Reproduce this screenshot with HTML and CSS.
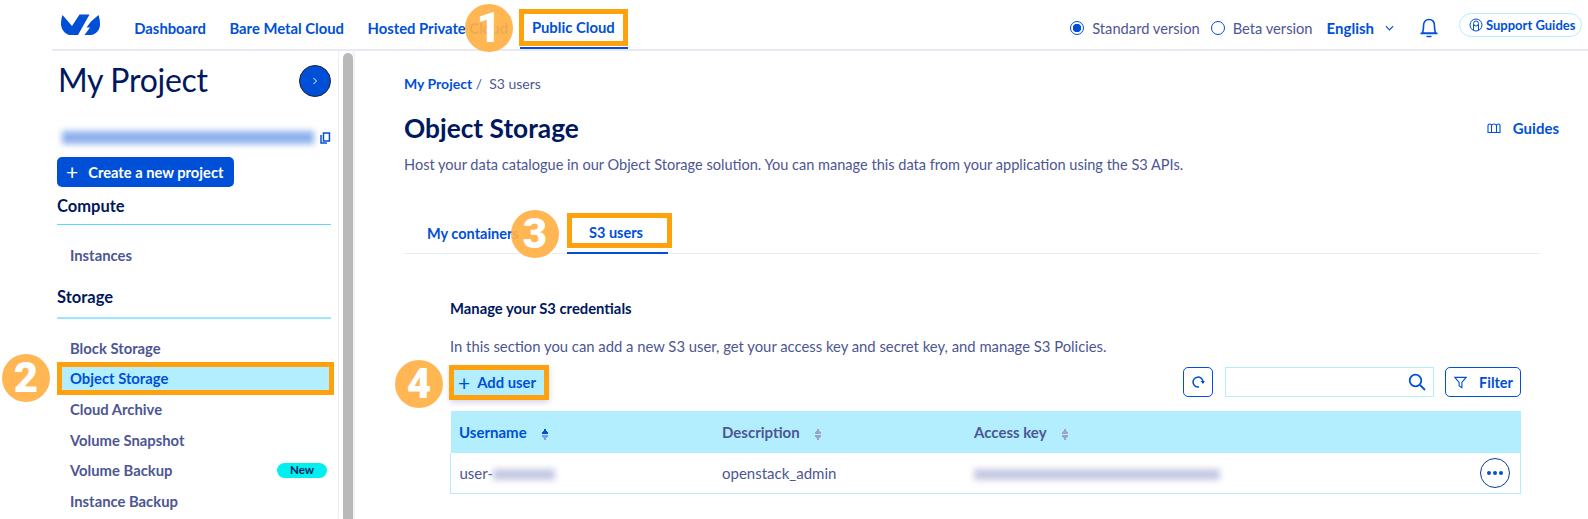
FILE: index.html
```html
<!DOCTYPE html>
<html lang="en">
<head>
<meta charset="utf-8">
<title>Object Storage</title>
<link rel="stylesheet" href="styles.css">
</head>
<body>
<header class="topbar">
  <svg class="logo" viewBox="0 0 39 22"><path d="M1.500 1 L11 12 L18.500 0.500 H28.500 L17 21 H8 C3.500 19.500 0 15 0 10 C0 6.500 0.500 3.500 1.500 1Z"/><path d="M37.500 1 C38.500 4 39 7 39 10.500 C39 16 35 20 30.500 21 H23.500 L29 13.500 H25.500 L30 7.500 Z"/></svg>
  <nav class="mainnav">
    <a class="navitem">Dashboard</a>
    <a class="navitem">Bare Metal Cloud</a>
    <a class="navitem">Hosted Private Cloud</a>
    <a class="navitem navitem-on">Public Cloud</a>
  </nav>
  <div class="topright">
    <span class="radio radio-on"></span><span class="radiolabel">Standard version</span>
    <span class="radio"></span><span class="radiolabel">Beta version</span>
    <span class="lang">English</span>
    <svg class="chev" viewBox="0 0 10 6"><path d="M1 1 L5 5 L9 1"/></svg>
    <svg class="bell" viewBox="0 0 18 20"><path d="M2 15 C3.500 13.500 3.500 11 3.500 8 C3.500 4 5.500 1.500 9 1.500 C12.500 1.500 14.500 4 14.500 8 C14.500 11 14.500 13.500 16 15 Z M0.500 15.500 H17.500 M6.500 18.500 H11.500"/></svg>
    <a class="support">
      <svg class="supporticon" viewBox="0 0 14 14"><circle cx="7" cy="7" r="6"/><circle cx="7" cy="5.500" r="2.500"/><path d="M4.500 6 V12 M9.500 6 V12"/></svg>
      Support Guides
    </a>
  </div>
</header>

<div class="layout">
  <aside class="sidebar">
    <div class="projectrow">
      <h1 class="projecttitle">My Project</h1>
      <span class="roundbtn"><svg viewBox="0 0 6 10"><path d="M1.500 2 L4.500 5 L1.500 8"/></svg></span>
    </div>
    <div class="idrow">
      <span class="idblur"></span>
      <svg class="copy" viewBox="0 0 11 12"><path d="M3.500 1 H9.500 V9 H3.500 Z M1 3 V11 H7"/></svg>
    </div>
    <a class="createbtn"><span class="plus">+</span>Create a new project</a>
    <h2 class="group group-first">Compute</h2>
    <a class="sideitem">Instances</a>
    <h2 class="group">Storage</h2>
    <ul class="sidelist">
      <li class="sideitem">Block Storage</li>
      <li class="sideitem sideitem-on">Object Storage</li>
      <li class="sideitem">Cloud Archive</li>
      <li class="sideitem">Volume Snapshot</li>
      <li class="sideitem">Volume Backup<span class="newpill">New</span></li>
      <li class="sideitem">Instance Backup</li>
    </ul>
  </aside>
  <div class="scrolltrack"><div class="scrollthumb"></div></div>

  <main class="content">
    <div class="crumbs"><a class="crumblink">My Project</a> / &nbsp;S3 users</div>
    <div class="titlerow">
      <h1 class="pagetitle">Object Storage</h1>
      <a class="guides">
        <svg class="guidesicon" viewBox="0 0 14 12"><path d="M1 3.500 C1 1.500 4 1.500 4.500 3.500 C5 1.500 9 1.500 9.500 3.500 C10 1.500 13 1.500 13 3.500 V10.500 H1 Z M4.500 3.500 V10.500 M9.500 3.500 V10.500"/></svg>
        Guides
      </a>
    </div>
    <p class="lead">Host your data catalogue in our Object Storage solution. You can manage this data from your application using the S3 APIs.</p>
    <div class="tabs">
      <a class="tab tab-first">My containers</a>
      <a class="tab tab-on">S3 users</a>
    </div>
    <section class="panel">
      <h3 class="paneltitle">Manage your S3 credentials</h3>
      <p class="paneltext">In this section you can add a new S3 user, get your access key and secret key, and manage S3 Policies.</p>
      <div class="toolbar">
        <a class="adduser"><span class="plus">+</span>Add user</a>
        <div class="tools">
          <span class="iconbtn"><svg viewBox="0 0 14 14"><path d="M8 12 A5 5 0 1 1 12 6.500"/><path class="solid" d="M9.500 6 H14 L12 9 Z"/></svg></span>
          <span class="searchbox"><svg viewBox="0 0 18 18"><circle cx="7.500" cy="7.500" r="5.800"/><path d="M12 12 L17 17"/></svg></span>
          <a class="filterbtn"><svg viewBox="0 0 14 14"><path d="M1 1.500 H13 L8.500 7 V12.500 L5.500 10.500 V7 Z"/></svg>Filter</a>
        </div>
      </div>
      <table class="grid">
        <thead>
          <tr>
            <th class="col-user col-sorted">Username<span class="sort"></span></th>
            <th class="col-desc">Description<span class="sort"></span></th>
            <th class="col-key">Access key<span class="sort"></span></th>
            <th></th>
          </tr>
        </thead>
        <tbody>
          <tr>
            <td>user-<span class="blur blur-user"></span></td>
            <td>openstack_admin</td>
            <td><span class="blur blur-key"></span></td>
            <td class="cell-actions"><span class="morebtn"><i></i><i></i><i></i></span></td>
          </tr>
        </tbody>
      </table>
    </section>
  </main>
</div>

<div class="hl hl-1"></div>
<div class="hl hl-2"></div>
<div class="hl hl-3"></div>
<div class="hl hl-4"></div>
<div class="num num-1">1</div>
<div class="num num-2">2</div>
<div class="num num-3">3</div>
<div class="num num-4">4</div>
</body>
</html>
```
FILE: styles.css
```css
* { box-sizing: border-box; }
html, body { margin: 0; height: 519px; overflow: hidden; background: #fff; }
body { font-family: "Lato", "Liberation Sans", sans-serif; color: #4d5693; font-size: 15px; position: relative; }
h1, h2, h3, p, ul { margin: 0; padding: 0; list-style: none; }
svg { display: block; fill: none; stroke: #0050d7; }

.topbar { height: 51px; margin-left: 52px; display: flex; align-items: center; border-bottom: 2px solid #e9e9f6; padding-top: 6px; }
.logo { width: 39px; height: 22px; margin-left: 9px; margin-right: 22.500px; margin-bottom: 6px; fill: #0050d7; stroke: none; }
.mainnav { display: flex; height: 49px; margin-top: -6px; }
.navitem { display: flex; align-items: center; padding: 6px 11.800px 0; color: #0050d7; font-weight: 700; font-size: 14.800px; height: 49px; white-space: nowrap; }
.navitem-on { border-bottom: 2px solid #0050d7; padding-left: 12px; padding-right: 12px; width: 108px; }
.topright { margin-left: auto; display: flex; align-items: center; padding-right: 6px; }
.radio { width: 14px; height: 14px; border-radius: 50%; border: 1.500px solid #0050d7; }
.radio-on { background: radial-gradient(circle, #0050d7 0 4px, #fff 4.500px); }
.radiolabel { margin-left: 8px; margin-right: 11px; font-size: 14.700px; }
.lang { color: #0050d7; font-weight: 700; font-size: 15px; margin-left: 3px; }
.chev { width: 9px; height: 6px; margin-left: 11px; stroke-width: 1.300; }
.bell { width: 18px; height: 20px; margin-left: 26px; stroke-width: 1.600; }
.support { display: flex; align-items: center; height: 24px; margin-top: -6px; margin-left: 21px; width: 123px; padding-left: 9px; border: 1px solid #b3eeff; border-radius: 12px; color: #0050d7; font-weight: 700; font-size: 13px; white-space: nowrap; }
.supporticon { width: 14px; height: 14px; margin-right: 3px; stroke-width: 1; }

.layout { display: flex; height: 468px; }
.sidebar { width: 339px; flex: none; padding: 14px 7px 0 57px; border-right: 1px solid #eeeeee; overflow: hidden; }
.projectrow { display: flex; justify-content: space-between; align-items: center; height: 32px; margin-left: 1px; }
.projecttitle { font-size: 32px; font-weight: 400; color: #00185e; line-height: 32px; letter-spacing: -0.3px; padding-bottom: 3px; }
.roundbtn { width: 32px; height: 32px; border-radius: 50%; background: #0050d7; border: 1px solid #223; display: flex; align-items: center; justify-content: center; }
.roundbtn svg { width: 6px; height: 10px; stroke: #fff; stroke-width: 1; }
.idrow { display: flex; align-items: center; margin-top: 33px; height: 15px; padding-left: 5px; }
.idblur { width: 254px; height: 13px; background: #8db0ec; filter: blur(3px); }
.copy { width: 11px; height: 12px; margin-left: 6px; stroke-width: 1.500; }
.createbtn { display: flex; align-items: center; margin-top: 12px; width: 177px; height: 30px; padding-bottom: 1px; border-radius: 5px; background: #0050d7; color: #fff; font-weight: 700; font-size: 14.700px; padding-left: 9px; }
.createbtn .plus { font-weight: 400; font-size: 21px; margin-right: 10px; line-height: 1; }
.group { font-size: 16.500px; font-weight: 700; color: #00185e; border-bottom: 2px solid #9de6ff; height: 48px; line-height: 20px; padding-top: 16px; }
.group-first { height: 38px; padding-top: 9px; margin-bottom: 15px; border-bottom: 1px solid #5fd8ff; }
.sideitem { display: flex; align-items: center; height: 30.600px; padding-left: 13px; font-weight: 700; font-size: 14.800px; padding-right: 4px; color: #4d5693; }
.sidelist { margin-top: 14px; }
.sideitem-on { background: #b3eeff; color: #0050d7; }
.newpill { margin-left: auto; width: 50px; height: 15px; border-radius: 8px; background: #00f0f0; color: #00185e; font-size: 11.500px; text-align: center; line-height: 14px; }

.scrolltrack { width: 16px; flex: none; padding: 2px 1px 0 4px; box-shadow: inset -4px 0 4px -3px #e6e6f5; }
.scrollthumb { width: 10px; height: 100%; background: #b9b9b9; border-radius: 5px 5px 0 0; }

.content { flex: 1; min-width: 0; padding: 23px 48px 0 49px; }
.crumbs { height: 20px; line-height: 20px; font-size: 14px; }
.crumblink { color: #0050d7; font-weight: 700; }
.titlerow { display: flex; justify-content: space-between; align-items: center; height: 36px; margin-top: 16px; }
.pagetitle { font-size: 26.300px; font-weight: 700; color: #00185e; }
.guides { display: flex; align-items: center; color: #0050d7; font-weight: 700; font-size: 15px; margin-right: -19px; }
.guidesicon { width: 14px; height: 12px; margin-right: 12px; stroke-width: 1.100; }
.lead { margin-top: 9px; line-height: 20px; font-size: 14.550px; white-space: nowrap; }
.tabs { display: flex; height: 41px; margin-top: 38px; border-bottom: 1px solid #e5edf5; }
.tab { height: 41px; display: flex; align-items: center; color: #0050d7; font-weight: 700; font-size: 14.500px; }
.tab-first { width: 163px; padding-left: 23px; }
.tab-on { width: 101px; padding-left: 22px; border-bottom: 2px solid #0050d7; }

.panel { padding: 0 19px 0 46px; }
.paneltitle { margin-top: 44px; font-size: 14.800px; line-height: 20px; font-weight: 700; color: #00185e; }
.paneltext { margin-top: 18px; line-height: 20px; font-size: 14.820px; white-space: nowrap; }
.toolbar { display: flex; justify-content: space-between; align-items: center; margin-top: 9px; height: 34px; }
.adduser { display: flex; align-items: center; width: 99px; height: 34px; padding-left: 8px; background: #b3eeff; color: #0050d7; font-weight: 700; font-size: 14.800px; box-shadow: 0 3px 6px rgba(0,30,120,.2); }
.adduser .plus { font-weight: 400; font-size: 21px; margin-right: 7px; line-height: 1; }
.tools { display: flex; align-items: center; }
.iconbtn { width: 30px; height: 30px; border: 1px solid #0050d7; border-radius: 5px; display: flex; align-items: center; justify-content: center; }
.iconbtn svg { width: 14px; height: 14px; stroke-width: 1.500; }
.iconbtn .solid { fill: #0050d7; stroke: none; }
.searchbox { width: 209px; height: 30px; margin-left: 12px; border: 1px solid #b3eeff; display: flex; align-items: center; justify-content: flex-end; padding-right: 7px; }
.searchbox svg { width: 18px; height: 18px; stroke-width: 1.800; }
.filterbtn { width: 76px; height: 30px; margin-left: 11px; border: 1px solid #0050d7; border-radius: 5px; display: flex; align-items: center; padding-left: 8px; color: #0050d7; font-weight: 700; font-size: 14.500px; }
.filterbtn svg { width: 13px; height: 13px; margin-right: 12px; stroke-width: 1.200; }

.grid { width: 100%; margin-top: 12px; border-collapse: collapse; table-layout: fixed; }
.grid th { height: 42px; background: #b3eeff; text-align: left; padding: 0 0 0 8.500px; font-size: 15px; font-weight: 700; color: #4d5693; }
.grid th.col-sorted { color: #0050d7; }
.col-user { width: 263px; }
.col-desc { width: 252px; }
.col-key { width: 300px; }
.sort { display: inline-block; vertical-align: middle; margin-left: 14px; width: 8px; height: 13px; background: conic-gradient(from 150deg at 50% 0, #9aa3cc 0 60deg, transparent 0) top/8px 6px no-repeat, conic-gradient(from -30deg at 50% 100%, #9aa3cc 0 60deg, transparent 0) bottom/8px 6px no-repeat; }
.col-sorted .sort { background: conic-gradient(from 150deg at 50% 0, #0050d7 0 60deg, transparent 0) top/8px 6px no-repeat, conic-gradient(from -30deg at 50% 100%, #7c9fe0 0 60deg, transparent 0) bottom/8px 6px no-repeat; }
.grid td { height: 40px; padding: 0 0 0 8.500px; font-size: 15px; border-bottom: 1px solid #b3eeff; }
.grid td:first-child { border-left: 1px solid #b3eeff; }
.grid td:last-child { border-right: 1px solid #b3eeff; }
.blur { display: inline-block; vertical-align: middle; height: 11px; filter: blur(3px); }
.blur-user { width: 62px; background: #c4c8e2; }
.blur-key { width: 246px; background: #c4c8e2; }
.cell-actions { text-align: right; padding-right: 10px !important; }
.morebtn { display: inline-flex; align-items: center; justify-content: center; gap: 2px; width: 30px; height: 30px; border-radius: 50%; border: 1px solid #0a3a9c; vertical-align: middle; }
.morebtn i { width: 4px; height: 4px; border-radius: 50%; background: #0050d7; }

.hl { position: absolute; border: 5px solid #ffa00d; }
.hl-1 { left: 519px; top: 9px; width: 109px; height: 37px; }
.hl-2 { left: 57px; top: 362px; width: 277px; height: 33px; }
.hl-3 { left: 567px; top: 213px; width: 105px; height: 35px; }
.hl-4 { left: 449px; top: 365px; width: 100px; height: 35px; }
.num { position: absolute; width: 48px; height: 48px; border-radius: 50%; background: rgba(255,176,70,.93); color: #fff; font-family: "Roboto", sans-serif; font-weight: 900; font-size: 42px; line-height: 48px; text-align: center; }
.num-1 { left: 465px; top: 4px; }
.num-2 { left: 2px; top: 354px; }
.num-3 { left: 511px; top: 210px; }
.num-4 { left: 395px; top: 360px; }
```
